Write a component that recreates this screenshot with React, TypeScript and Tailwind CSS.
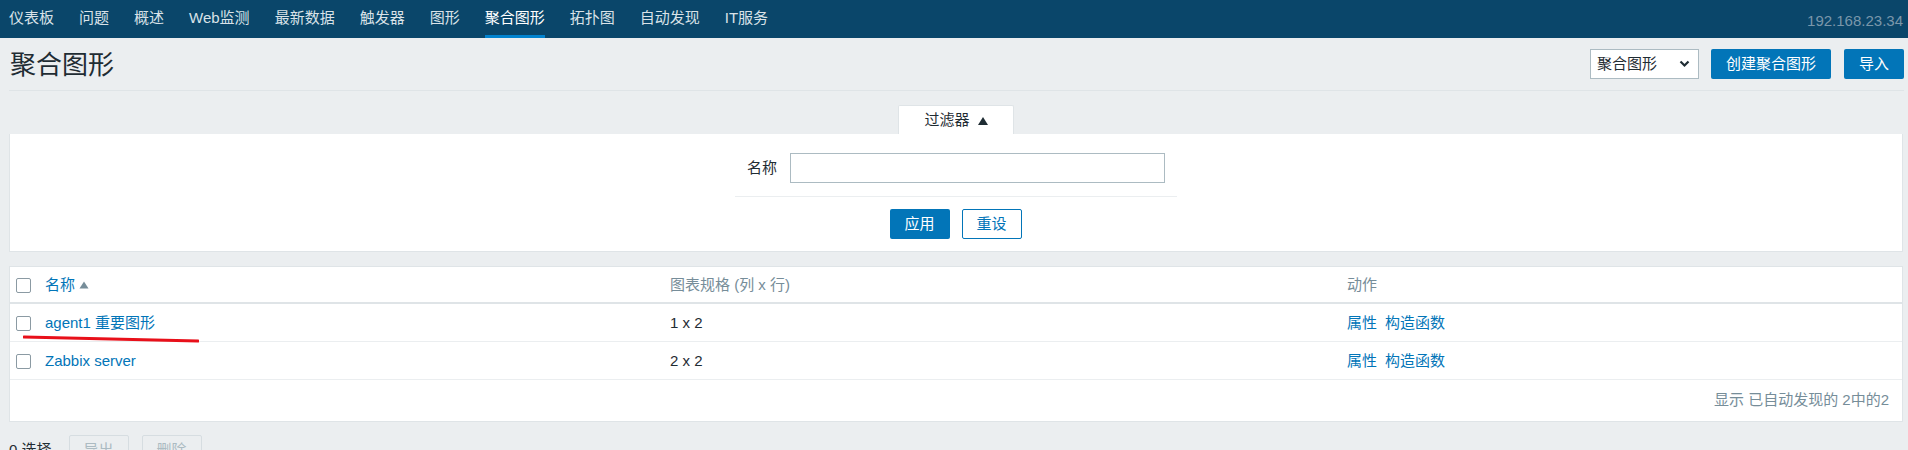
const navItems = [
  '仪表板',
  '问题',
  '概述',
  'Web监测',
  '最新数据',
  '触发器',
  '图形',
  '聚合图形',
  '拓扑图',
  '自动发现',
  'IT服务',
];

const rows = [
  { name: 'agent1 重要图形', size: '1 x 2' },
  { name: 'Zabbix server', size: '2 x 2' },
];

function Checkbox() {
  return <span className="block w-[15px] h-[15px] rounded-[2px] border border-[#8b9aa3] bg-white" />;
}

export default function App() {
  return (
    <div
      className="min-h-[450px] bg-[#ebeef0] text-[15px] text-[#1f2c33]"
      style={{ fontFamily: '"Liberation Sans", "Noto Sans CJK SC", sans-serif' }}
    >
      {/* top navigation */}
      <nav className="h-[38px] bg-[#0a466a] flex items-stretch justify-between pl-[9px] pr-[5px]">
        <ul className="flex items-stretch gap-[25px]">
          {navItems.map((item) => {
            const active = item === '聚合图形';
            return (
              <li
                key={item}
                className={`flex items-center pt-[2px] border-b-[3px] ${
                  active ? 'text-white border-[#0283cf]' : 'text-[#d9e2e8] border-transparent'
                }`}
              >
                {item}
              </li>
            );
          })}
        </ul>
        <div className="flex items-center text-[#7a97aa] pt-[4px]">192.168.23.34</div>
      </nav>

      <main className="pl-[9px] pr-[4px]">
        {/* page header */}
        <header className="h-[53px] flex items-center justify-between border-b border-[#dfe4e7]">
          <h1 className="text-[26px] leading-none pl-[1px] pt-[1px]">聚合图形</h1>
          <div className="flex items-center">
            <div className="w-[109px] h-[30px] bg-white border border-[#acbbc2] flex items-center justify-between pl-[6px] pr-[8px]">
              <span>聚合图形</span>
              <svg width="11" height="8" viewBox="0 0 11 8">
                <path d="M1.5 1.5 L5.5 5.5 L9.5 1.5" fill="none" stroke="#1f2c33" strokeWidth="2.2" />
              </svg>
            </div>
            <button className="ml-[12px] h-[30px] px-[15px] bg-[#0275b8] text-white rounded-[2px]">创建聚合图形</button>
            <button className="ml-[13px] h-[30px] px-[15px] bg-[#0275b8] text-white rounded-[2px]">导入</button>
          </div>
        </header>

        {/* filter */}
        <div className="pt-[14px] flex justify-center pr-[1px]">
          <div className="w-[116px] h-[29px] bg-white border border-b-0 border-[#dfe4e7] rounded-t-[2px] flex items-center justify-center gap-[8px] pt-[1px]">
            <span>过滤器</span>
            <svg width="10" height="8" viewBox="0 0 10 8">
              <path d="M0 8 L5 0 L10 8 Z" fill="#1f2c33" />
            </svg>
          </div>
        </div>
        <section className="mr-[1px] h-[118px] bg-white border border-[#dfe4e7] border-t-0 flex flex-col items-center pt-[19px]">
          <div className="w-[442px]">
            <div className="flex items-center pb-[13px] border-b border-[#ebeef0]">
              <label className="w-[42px] text-right">名称</label>
              <input className="ml-[13px] w-[375px] h-[30px] border border-[#acbbc2] bg-white outline-none" />
            </div>
            <div className="flex justify-center gap-[12px] pt-[12px] pr-[1px]">
              <button className="w-[60px] h-[30px] bg-[#0275b8] text-white rounded-[2px]">应用</button>
              <button className="w-[60px] h-[30px] bg-white text-[#0275b8] border border-[#0275b8] rounded-[2px]">重设</button>
            </div>
          </div>
        </section>

        {/* list */}
        <section className="relative mt-[14px] mr-[1px] bg-white border border-[#dfe4e7]">
          <div className="flex items-center h-[37px] pt-[1px] border-b-2 border-[#dfe4e7]">
            <div className="w-[29px] pl-[6px]">
              <Checkbox />
            </div>
            <div className="w-[625px] pl-[6px] flex items-center gap-[4px] text-[#0275b8]">
              名称
              <svg width="10" height="8" viewBox="0 0 10 8">
                <path d="M0.5 7.5 L5 0.5 L9.5 7.5 Z" fill="#768d99" />
              </svg>
            </div>
            <div className="w-[677px] pl-[6px] text-[#768d99]">图表规格 (列 x 行)</div>
            <div className="flex-1 pl-[6px] text-[#768d99]">动作</div>
          </div>
          {rows.map((row) => (
            <div key={row.name} className="flex items-center h-[38px] pt-[2px] border-b border-[#ebeef0] last-of-type:h-[37px]">
              <div className="w-[29px] pl-[6px]">
                <Checkbox />
              </div>
              <div className="w-[625px] pl-[6px] text-[#0275b8]">{row.name}</div>
              <div className="w-[677px] pl-[6px]">{row.size}</div>
              <div className="flex-1 pl-[6px] text-[#0275b8] flex gap-[8px]">
                <span>属性</span>
                <span>构造函数</span>
              </div>
            </div>
          ))}
          <div className="h-[41px] flex items-center justify-end pr-[13px] text-[#768d99]">显示 已自动发现的 2中的2</div>

          {/* annotation */}
          <svg className="absolute left-[13px] top-[68px]" width="176" height="8" viewBox="0 0 176 8">
            <path d="M1 2 L175 6" stroke="#e8101a" strokeWidth="3" strokeLinecap="round" />
          </svg>
        </section>

        {/* actions bar */}
        <div className="flex items-center pt-[13px]">
          <span className="text-[#1f2c33]">0 选择</span>
          <button className="ml-[17px] w-[60px] h-[30px] bg-[#ebeef0] border border-[#d6dde1] text-[#acbbc2] rounded-[2px]">导出</button>
          <button className="ml-[13px] w-[60px] h-[30px] bg-[#ebeef0] border border-[#d6dde1] text-[#acbbc2] rounded-[2px]">删除</button>
        </div>
      </main>
    </div>
  );
}
